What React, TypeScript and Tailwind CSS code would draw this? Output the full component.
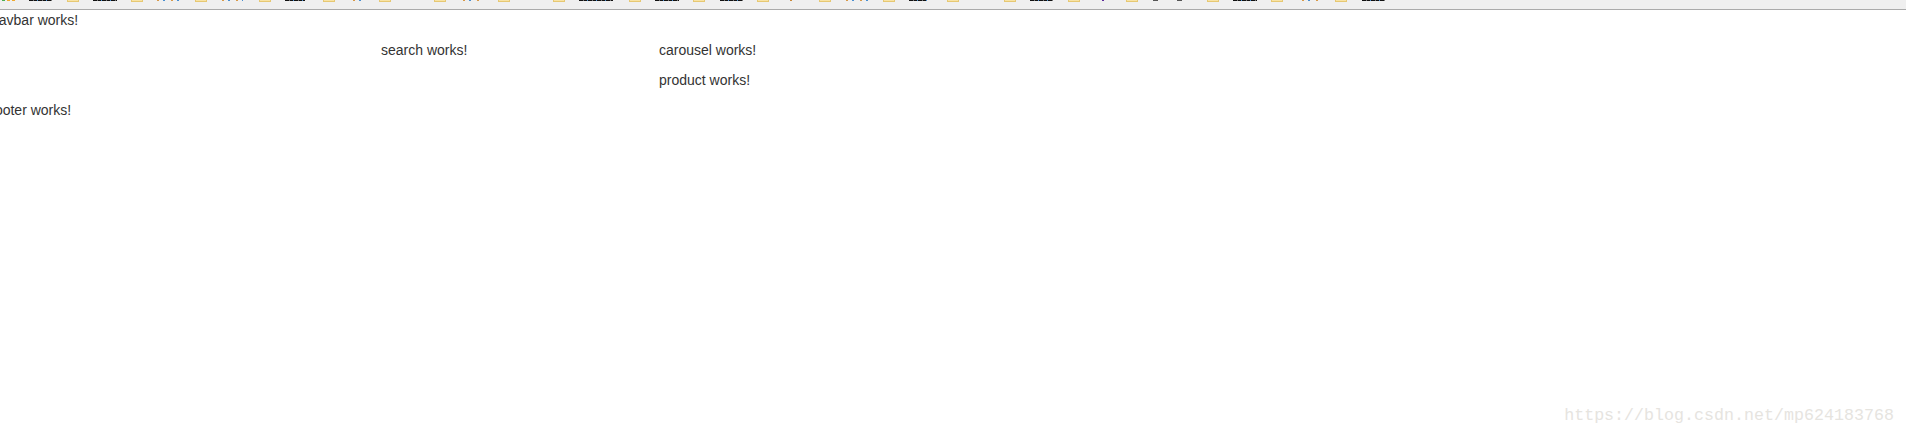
import React from "react";

// the bookmarks bar is scrolled off the top: only folder bottoms and the feet of the labels show
const dark =
  "bg-[repeating-linear-gradient(90deg,#111_0_4px,#777_4px_5px,#111_5px_8px,#4a8fd0_8px_9px)]";
const light =
  "bg-[repeating-linear-gradient(90deg,#d89a4a_0_2px,transparent_2px_6px,#4a8fd0_6px_8px,transparent_8px_14px)]";

const bookmarks = [
  { width: "w-[64px]", foot: "ml-[14px] w-[24px]", tone: dark },
  { width: "w-[64px]", foot: "ml-[14px] w-[23px]", tone: light },
  { width: "w-[64px]", foot: "ml-[15px] w-[21px]", tone: light },
  { width: "w-[64px]", foot: "ml-[14px] w-[20px]", tone: dark },
  { width: "w-[56px]", foot: "ml-[18px] w-[12px]", tone: light },
  { width: "w-[55px]" },
  { width: "w-[64px]", foot: "ml-[17px] w-[17px]", tone: light },
  { width: "w-[55px]" },
  { width: "w-[76px]", foot: "ml-[14px] w-[34px]", tone: dark },
  { width: "w-[64px]", foot: "ml-[14px] w-[24px]", tone: dark },
  { width: "w-[64px]", foot: "ml-[15px] w-[23px]", tone: dark },
  { width: "w-[62px]", foot: "ml-[21px] w-[2px]", tone: "bg-[#c98a3c]" },
  { width: "w-[64px]", foot: "ml-[15px] w-[22px]", tone: light },
  { width: "w-[64px]", foot: "ml-[14px] w-[18px]", tone: dark },
  { width: "w-[57px]" },
  { width: "w-[64px]", foot: "ml-[14px] w-[23px]", tone: dark },
  { width: "w-[58px]", foot: "ml-[22px] w-[2px]", tone: "bg-[#5b2a9a]" },
  { width: "w-[81px]", foot: "ml-[15px] w-[29px]", tone: "bg-[linear-gradient(90deg,#555_0_5px,transparent_5px_24px,#555_24px)]" },
  { width: "w-[64px]", foot: "ml-[14px] w-[24px]", tone: dark },
  { width: "w-[64px]", foot: "ml-[19px] w-[18px]", tone: light },
  { width: "w-[64px]", foot: "ml-[15px] w-[23px]", tone: dark },
];

const BookmarksBar = () => (
  <div className="flex h-[10px] shrink-0 overflow-hidden border-b border-[#aaaaaa] bg-[#efefef] pl-[2px]">
    {/* favicon remains and the first label */}
    <div className="flex w-[65px] shrink-0 items-start">
      <div className="flex gap-[2px]">
        <div className="h-[1px] w-[3px] bg-[#4caf50]" />
        <div className="h-[1px] w-[3px] bg-[#f0a92e]" />
        <div className="h-[1px] w-[3px] bg-[#f0a92e]" />
      </div>
      <div className={`ml-[14px] h-[1px] w-[23px] ${dark}`} />
    </div>
    {bookmarks.map((b, i) => (
      <div key={i} className={`flex shrink-0 items-start ${b.width}`}>
        <div className="h-[2px] w-[12px] shrink-0 border-x border-b border-[#e6c873] bg-[#f8e3a4]" />
        {b.foot && <div className={`h-[1px] shrink-0 ${b.foot} ${b.tone}`} />}
      </div>
    ))}
  </div>
);

export default function App() {
  return (
    <div className="flex h-[436px] flex-col overflow-hidden bg-white font-['Liberation_Sans',Arial,sans-serif] text-[14px] leading-[20px] text-[#333333]">
      <BookmarksBar />

      <div className="-ml-[9px]">
        <p className="mb-[10px]">navbar works!</p>
        <div className="flex pl-[390px]">
          <div className="w-[278px]">
            <p className="mb-[10px]">search works!</p>
          </div>
          <div>
            <p className="mb-[10px]">carousel works!</p>
            <p className="mb-[10px]">product works!</p>
          </div>
        </div>
        <p className="mb-[10px]">footer works!</p>
      </div>

      {/* blog watermark */}
      <div className="mb-[8px] mr-[12px] mt-auto self-end font-['Liberation_Mono',monospace] text-[16.67px] leading-[24px] text-[#e6e4df]">
        https://blog.csdn.net/mp624183768
      </div>
    </div>
  );
}
